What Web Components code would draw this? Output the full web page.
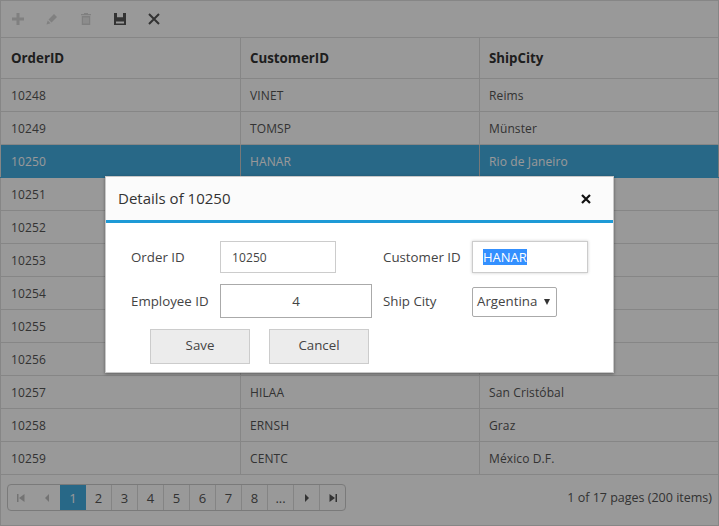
<!DOCTYPE html>
<html><head><meta charset="utf-8">
<style>
html,body{margin:0;padding:0;height:526px;overflow:hidden;background:#fff}
body{font-family:"Open Sans","Noto Sans",sans-serif;font-size:12px;color:#555;position:relative}
</style></head><body>
<x-app></x-app>
<template id="t-toolbar"><style>
:host{display:flex;align-items:center;height:36px;border:1px solid #e0e0e0;padding-left:5px;gap:10px;background:#fff}
span{width:24px;height:24px;display:flex;align-items:center;justify-content:center}
svg{width:12px;height:12px;display:block}
.off{opacity:.2}
</style>
<span class="off"><svg viewBox="0 0 12 12"><path d="M4.500 0h3v4.500H12v3H7.500V12h-3V7.500H0v-3h4.500z" fill="#333"/></svg></span>
<span class="off"><svg viewBox="0 0 12 12"><path d="M8 1l3 3-5.500 5.500-3-3zM1.700 7.500l2.800 2.800L.5 11.500z" fill="#333"/></svg></span>
<span class="off"><svg viewBox="0 0 12 12"><path d="M4 0h4v1h3v1.200H1V1h3zM1.800 3h8.400v9H1.800zM3.500 4.500v6h1v-6zM5.500 4.500v6h1v-6zM7.500 4.500v6h1v-6z" fill="#333" fill-rule="evenodd"/></svg></span>
<span><svg viewBox="0 0 12 12"><path d="M0 0h12v12H0zM3 0v4.300h6V0zM2 8.500v2h8v-2z" fill="#555" fill-rule="evenodd"/></svg></span>
<span><svg viewBox="0 0 12 12"><path d="M1 1l10 10M11 1L1 11" stroke="#555" stroke-width="2" fill="none"/></svg></span>
</template>
<template id="t-row"><style>
:host{display:grid;grid-template-columns:241px 239px 1fr;height:32px;border-bottom:1px solid #e0e0e0;align-items:stretch;letter-spacing:.12px}
:host([head]){height:40px;font-weight:700;font-size:13.300px;color:#333;letter-spacing:0}
:host([sel]){background:#44ade2;color:#fff;border-bottom-color:#44ade2}
div{display:flex;align-items:center;padding-left:9px;border-right:1px solid #e0e0e0;white-space:nowrap}
:host([sel]) div{border-right-color:#c8c8c8}
div:first-of-type{border-left:1px solid #e0e0e0;padding-left:10px}
</style><div id="a"></div><div id="b"></div><div id="c"></div></template>
<template id="t-pager"><style>
:host{display:flex;justify-content:space-between;align-items:flex-start;height:51px;padding:9px 6px 0;box-sizing:border-box;border:1px solid #e0e0e0;border-top:0}
.p{display:flex;border:1px solid #ccc;border-radius:4px;height:27px;box-sizing:border-box;overflow:hidden}
.p span{width:26px;box-sizing:border-box;display:flex;align-items:center;justify-content:center;border-right:1px solid #ddd;font-size:13px}
.p span:last-child{border-right:0;width:25px}
.p span.a{background:#44ade2;color:#fff;border-right:0}
.p span.d{opacity:.3;border-right-color:transparent}
svg{width:8px;height:8px}
.info{font-size:12.500px;line-height:27px}
</style><div class="p">
<span class="d"><svg viewBox="0 0 8 8"><path d="M0 0h1.500v8H0zM7.500 0v8L2 4z" fill="#333"/></svg></span>
<span class="d"><svg viewBox="0 0 8 8"><path d="M6 0v8L2 4z" fill="#333"/></svg></span>
<span class="a">1</span><span>2</span><span>3</span><span>4</span><span>5</span><span>6</span><span>7</span><span>8</span><span>...</span>
<span><svg viewBox="0 0 8 8"><path d="M2 0v8l4-4z" fill="#555"/></svg></span>
<span><svg viewBox="0 0 8 8"><path d="M6.500 0H8v8H6.500zM.5 0v8L6 4z" fill="#555"/></svg></span>
</div><div class="info">1 of 17 pages (200 items)</div></template>
<template id="t-dialog"><style>
:host{position:absolute;left:105px;top:176px;width:509px;height:197px;background:#fff;border:1px solid #c8c8c8;box-sizing:border-box;box-shadow:0 1px 3px rgba(0,0,0,.4);display:block}
.h{display:flex;justify-content:space-between;align-items:center;height:41px;background:#fbfbfb;border-bottom:3px solid #1e9ad6;padding:0 22px 2px 12px;font-size:15px;color:#333}
.h svg{width:10px;height:10px;margin-top:2px}
</style>
<div class="h"><span>Details of 10250</span><svg viewBox="0 0 10 10"><path d="M1 1l8 8M9 1l-8 8" stroke="#111" stroke-width="2.2"/></svg></div>
<slot></slot></template>
<template id="t-form"><style>
:host{display:grid;grid-template-columns:89px 152px 11px 89px 116px;padding:18px 25px 0;font-size:13.300px;color:#444;align-items:center;row-gap:11px}
.i{box-sizing:border-box;border:1px solid #ccc;background:#fff;display:flex;align-items:center;height:32px;padding-left:11px;white-space:nowrap;width:116px}
.o{font-size:12px;letter-spacing:.1px}
.e{height:34px;border-color:#aaa;justify-content:center;padding-left:0;width:152px}
.c{box-shadow:0 0 3px rgba(0,0,0,.2);padding-left:10px;font-size:13px}
mark{background:#3390ff;color:#fff;display:inline-block;line-height:16px}
.s{width:85px;height:30px;border:1px solid #aaa;border-radius:2px;box-sizing:border-box;display:flex;align-items:center;justify-content:space-between;padding:0 5px 2px 4px;margin-top:1px}
.s i{width:0;height:0;border-left:3.500px solid transparent;border-right:3.500px solid transparent;border-top:6px solid #333;margin:2px 1px 0 0}
.btns{grid-column:1/-1;display:flex;gap:19px;padding-left:19px}
.btns span{width:100px;height:35px;box-sizing:border-box;border:1px solid #ccc;background:#ececec;display:flex;align-items:center;justify-content:center;padding-bottom:3px}
</style>
<span>Order ID</span><div class="i o">10250</div><span></span><span>Customer ID</span><div class="i c"><mark>HANAR</mark></div>
<span>Employee ID</span><div class="i e">4</div><span></span><span>Ship City</span><div class="s">Argentina<i></i></div>
<div class="btns"><span>Save</span><span>Cancel</span></div>
</template>
<template id="t-app"><style>
:host{display:block;width:719px;height:526px;position:relative;overflow:hidden}
.ov{position:absolute;inset:0;background:rgba(0,0,0,.4)}
</style>
<x-toolbar></x-toolbar><x-grid></x-grid><x-pager></x-pager><div class="ov"></div><x-dialog><x-form></x-form></x-dialog>
</template>
<script>
const def=(n,t,extra)=>customElements.define(n,class extends HTMLElement{constructor(){super();this.attachShadow({mode:'open'}).append(document.getElementById(t).content.cloneNode(true));}connectedCallback(){extra&&extra(this)}});
def('x-toolbar','t-toolbar');def('x-pager','t-pager');def('x-dialog','t-dialog');def('x-form','t-form');def('x-app','t-app');
def('x-row','t-row',el=>{const s=el.shadowRoot;['a','b','c'].forEach(k=>s.getElementById(k).textContent=el.getAttribute(k))});
const rows=[['10248','VINET','Reims'],['10249','TOMSP','Münster'],['10250','HANAR','Rio de Janeiro'],['10251','',''],['10252','',''],['10253','',''],['10254','',''],['10255','',''],['10256','',''],['10257','HILAA','San Cristóbal'],['10258','ERNSH','Graz'],['10259','CENTC','México D.F.']];
customElements.define('x-grid',class extends HTMLElement{constructor(){super();const r=this.attachShadow({mode:'open'});r.innerHTML='<style>:host{display:block}</style><x-row head a="OrderID" b="CustomerID" c="ShipCity"></x-row>'+rows.map((x,i)=>`<x-row ${i==2?'sel':''} a="${x[0]}" b="${x[1]}" c="${x[2]}"></x-row>`).join('')}});
</script>
</body></html>
